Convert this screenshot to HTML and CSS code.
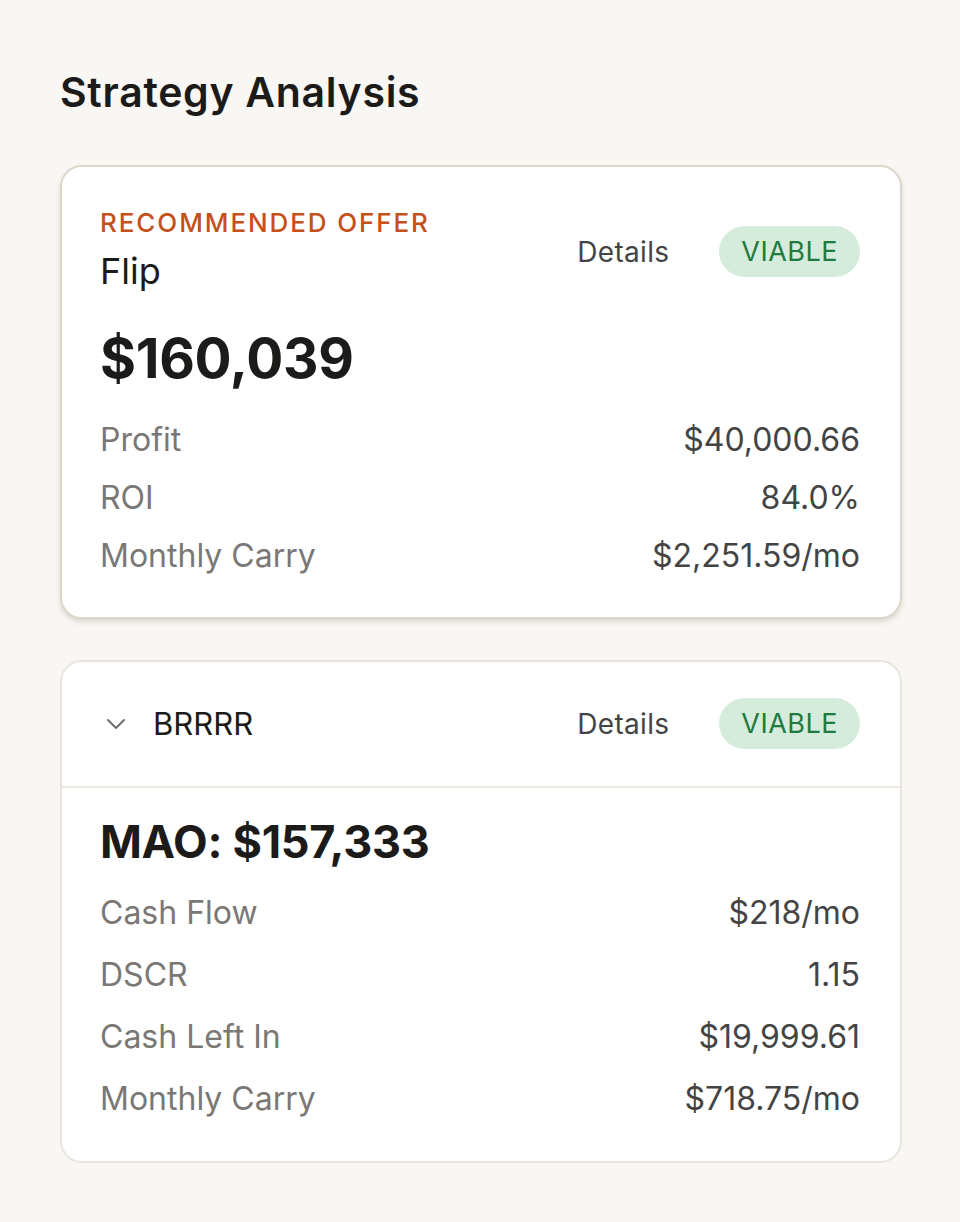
FILE: index.html
```html
<!DOCTYPE html>
<html>
	<head>
		<title>Strategy Analysis</title>
		<link rel="stylesheet" href="styles.css">
	</head>
	<body>
		<div class="page">
			<h1 class="title">Strategy Analysis</h1>

			<div class="card card-main">
				<div class="head">
					<div class="head-left">
						<div class="eyebrow">RECOMMENDED OFFER</div>
						<div class="name">Flip</div>
					</div>
					<div class="head-right">
						<span class="details">Details</span>
						<span class="pill">VIABLE</span>
					</div>
				</div>
				<div class="amount">$160,039</div>
				<div class="rows">
					<div class="row"><span class="label">Profit</span><span class="value">$40,000.66</span></div>
					<div class="row"><span class="label">ROI</span><span class="value">84.0%</span></div>
					<div class="row"><span class="label">Monthly Carry</span><span class="value">$2,251.59/mo</span></div>
				</div>
			</div>

			<div class="card card-alt">
				<div class="bar">
					<div class="bar-left">
						<svg class="chev" width="20" height="12" viewBox="0 0 20 12"><path d="M2 2l8 8 8-8" fill="none" stroke="#6b6966" stroke-width="1.8" stroke-linecap="round" stroke-linejoin="round"/></svg>
						<span class="name name-sm">BRRRR</span>
					</div>
					<div class="head-right">
						<span class="details">Details</span>
						<span class="pill">VIABLE</span>
					</div>
				</div>
				<div class="body">
					<div class="amount amount-sm">MAO: $157,333</div>
					<div class="rows rows-wide">
						<div class="row"><span class="label">Cash Flow</span><span class="value">$218/mo</span></div>
						<div class="row"><span class="label">DSCR</span><span class="value">1.15</span></div>
						<div class="row"><span class="label">Cash Left In</span><span class="value">$19,999.61</span></div>
						<div class="row"><span class="label">Monthly Carry</span><span class="value">$718.75/mo</span></div>
					</div>
				</div>
			</div>
		</div>
	</body>
</html>
```
FILE: styles.css
```css
html, body { margin: 0; padding: 0; }
body {
	background-color: #f8f7f3;
	font-family: Inter, "Noto Sans", sans-serif;
	color: #1c1b19;
}
.page { padding: 66px 58px 58px 60px; }

.title {
	margin: 0 0 47px 0;
	font-size: 41px;
	font-weight: 600;
	line-height: 52px;
	letter-spacing: 0.7px;
}

.card {
	background-color: #fff;
	border: 2px solid #e4dfd6;
	border-radius: 22px;
}
.card-main {
	padding: 39px 40px 32px 38px;
	box-shadow: 0 3px 5px rgba(80, 70, 50, 0.18);
	border-color: #ddd6ca;
}
.card-alt {
	margin-top: 41px;
	border-color: #e8e5dc;
}

.head { display: flex; align-items: center; justify-content: space-between; }
.eyebrow {
	color: #c4501a;
	font-size: 26px;
	font-weight: 500;
	letter-spacing: 1.9px;
	line-height: 34px;
}
.name { font-size: 36px; line-height: 44px; font-weight: 400; margin-top: 9px; }
.name-sm { font-size: 31px; margin-top: 0; }

.head-right { display: flex; align-items: center; gap: 50px; padding-top: 4px; }
.details { font-size: 28px; color: #444; letter-spacing: 0.3px; }
.pill {
	background-color: #d5ecdc;
	color: #1f7a3e;
	font-size: 27px;
	letter-spacing: 0.5px;
	line-height: 51px;
	padding: 0 22px;
	border-radius: 26px;
}

.amount {
	font-size: 55px;
	font-weight: 700;
	line-height: 66px;
	margin-top: 32px;
	letter-spacing: -0.3px;
}

.rows { margin-top: 20px; }
.row {
	display: flex;
	justify-content: space-between;
	font-size: 32px;
	line-height: 58px;
}
.label { color: #7a7875; }
.value { color: #444; }

.bar {
	display: flex;
	align-items: center;
	justify-content: space-between;
	padding: 36px 40px 37px 44px;
	border-bottom: 2px solid #ebe9e2;
}
.bar .head-right { padding-top: 0; }
.bar-left { display: flex; align-items: center; gap: 27px; }
.chev { display: block; }

.body { padding: 24px 40px 31px 38px; }
.amount-sm { font-size: 45px; margin-top: 0; line-height: 60px; }
.rows-wide { margin-top: 10px; }
.rows-wide .row { line-height: 62px; }
```
